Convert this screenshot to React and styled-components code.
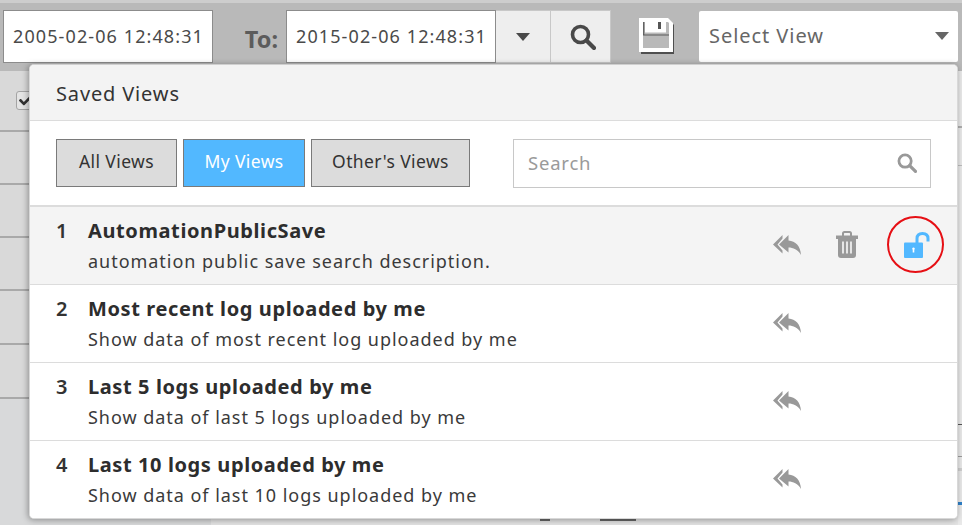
import React from 'react';
import styled, { createGlobalStyle } from 'styled-components';
import { FaCheck } from 'react-icons/fa';

const Global = createGlobalStyle`
  html, body { margin: 0; padding: 0; background: #dadbdc; }
  * { box-sizing: border-box; }
`;
const FONT = `"Noto Sans", "Open Sans", "DejaVu Sans", sans-serif`;

const Page = styled.div`
  position: relative; width: 962px; height: 525px; overflow: hidden;
  font-family: ${FONT}; background: #dadbdc; color: #333;
`;
const Toolbar = styled.div`
  height: 71px; background: #b9b9b9; border-top: 3px solid #cdcdcd;
  display: flex; align-items: flex-start; padding: 7px 4px 0 3px;
`;
const DateInput = styled.div`
  width: 210px; height: 53px; background: #fff; border: 1px solid #8c8c8c;
  display: flex; align-items: center; padding: 0 0 2px 9px;
  font-size: 18px; letter-spacing: 1.1px; color: #4a4a4a; white-space: nowrap;
`;
const ToLabel = styled.span`
  width: 73px; height: 53px; display: flex; align-items: center; justify-content: flex-end;
  padding: 4px 8px 0 0; font-size: 23.5px; font-weight: 700; color: #5c5c5c;
`;
const ToolButton = styled.div`
  width: ${p => p.$w}px; height: 53px; background: #eee; border: 1px solid #c8c8c8; border-left: 0;
  display: flex; align-items: center; justify-content: center; color: #494949;
  padding-left: ${p => p.$pl || 0}px;
`;
const SaveWrap = styled.div`
  width: 88px; height: 53px; display: flex; align-items: center; justify-content: center; padding: 0 0 1px 4px;
`;
const SelectBox = styled.div`
  width: 259px; height: 51px; margin-top: 1px; background: #fff; border-radius: 2px;
  display: flex; align-items: center; justify-content: space-between; padding: 0 9px 2px 10px;
  font-size: 20px; letter-spacing: 0.95px; color: #666;
`;
const Content = styled.div` display: flex; height: 454px; `;
const MainCol = styled.div` width: 958px; display: flex; flex-direction: column; `;
const Edge = styled.div`
  width: 4px; background: #e9e9e9; display: flex; flex-direction: column;
`;
const EdgeMark = styled.div`
  height: ${p => p.$h}px; margin-top: ${p => p.$m}px; background: ${p => p.$c};
`;
const Rows = styled.div` display: flex; flex-direction: column; height: 328px; background: #d9d9d9; `;
const BgRow = styled.div`
  height: ${p => p.$h}px; border-bottom: 2px solid #a9a9a9; padding: 20px 0 0 16px;
`;
const Check = styled.span`
  display: flex; align-items: center; justify-content: center; width: 19px; height: 19px;
  border: 1px solid #a4a4a4; border-radius: 3px; background: #e4e4e4; color: #333; font-size: 13px;
`;
const Footer = styled.div` flex: 1; display: flex; background: #e3e3e3; `;
const FooterLeft = styled.div` width: 211px; background: #d8d9da; `;
const Pager = styled.div` display: flex; align-items: flex-start; padding: 120px 0 0 329px; gap: 50px; `;
const PagerMark = styled.div` width: ${p => p.$w}px; height: 2px; background: #666; `;
const Panel = styled.div`
  position: absolute; left: 29px; top: 64px; width: 929px; height: 455px;
  background: #fff; border-radius: 5px; box-shadow: -1px 1px 6px rgba(0,0,0,.35);
  border: 1px solid #d8d8d8; border-top-color: #cfcfcf; overflow: hidden;
`;
const PanelHead = styled.div`
  height: 56px; background: #f3f3f3; border-bottom: 1px solid #dcdcdc;
  display: flex; align-items: center; padding: 1px 0 0 26px; font-size: 20px; letter-spacing: 0.85px; color: #333;
`;
const Filters = styled.div`
  height: 86px; display: flex; align-items: flex-start; padding: 18px 26px 0 26px; gap: 6px;
  border-bottom: 2px solid #dcdcdc;
`;
const Tab = styled.div`
  height: 48px; width: ${p => p.$w}px; display: flex; align-items: center; justify-content: center;
  padding-bottom: 4px; border: 1px solid #7a7a7a; font-size: 17.5px; letter-spacing: 0.4px;
  background: ${p => p.$active ? '#52b8ff' : '#dcdcdc'}; color: ${p => p.$active ? '#fff' : '#333'};
`;
const SearchBox = styled.div`
  margin-left: 37px; width: 418px; height: 49px; border: 1px solid #c8c8c8;
  display: flex; align-items: center; justify-content: space-between; padding: 0 13px 2px 14px;
  font-size: 18.5px; letter-spacing: 0.8px; color: #9a9a9a;
`;
const Row = styled.div`
  height: ${p => p.$last ? 77 : 78}px; display: flex; padding-left: 26px; background: ${p => p.$active ? '#f4f4f4' : '#fff'};
  border-bottom: ${p => p.$last ? 0 : '1px solid #dcdcdc'};
`;
const Num = styled.div` width: 32px; padding-top: 10px; font-size: 20px; font-weight: 600; color: #333; `;
const Info = styled.div` flex: 1; padding-top: 10px; `;
const Title = styled.div` font-size: 20px; line-height: 27px; font-weight: 700; letter-spacing: 0.6px; color: #2d2d2d; `;
const Desc = styled.div` font-size: 18px; line-height: 25px; margin-top: 5px; letter-spacing: 0.97px; color: #3a3a3a; `;
const Actions = styled.div` display: flex; align-items: center; width: 197px; padding: 0 0 2px 0; color: #999; `;
const ActionCell = styled.div` width: ${p => p.$w}px; display: flex; justify-content: center; `;
const LockCell = styled.div`
  width: 57px; height: 57px; border: 2px solid #e60f14; border-radius: 50%;
  display: flex; align-items: center; justify-content: center; padding: 0 0 0 3px;
`;

const views = [
  { t: 'AutomationPublicSave', d: 'automation public save search description.', own: true },
  { t: 'Most recent log uploaded by me', d: 'Show data of most recent log uploaded by me' },
  { t: 'Last 5 logs uploaded by me', d: 'Show data of last 5 logs uploaded by me' },
  { t: 'Last 10 logs uploaded by me', d: 'Show data of last 10 logs uploaded by me' },
];

const edgeMarks = [
  { m: 55, h: 2, c: '#aeaeae' }, { m: 37, h: 1, c: '#bdbdbd' }, { m: 258, h: 1, c: '#555' },
  { m: 31, h: 1, c: '#9c9c9c' }, { m: 11, h: 3, c: '#cfcfcf' }, { m: 31, h: 3, c: '#2f80c8' },
];

const SaveIcon = () => (
  <svg width="36" height="36" viewBox="0 0 36 36">
    <path d="M2 2h28l5 5v29H2z" fill="#4f4f4f" />
    <path d="M0 0h29l5 5v29H0z" fill="#fff" />
    <path d="M4 4h25l1 1v25H4z" fill="#b9b9b9" />
    <path d="M4.7 4v12.500M4 17h26" stroke="#5a5a5a" strokeWidth="1.200" fill="none" />
    <path d="M6 0h21v14.500H6z" fill="#fff" />
    <path d="M19 4h3v7h-3z" fill="#555" />
  </svg>
);
const Magnifier = ({ size, color }) => (
  <svg width={size} height={size} viewBox="0 0 26 26">
    <circle cx="10.500" cy="10.500" r="8" fill="none" stroke={color} strokeWidth="3.600" />
    <path d="M16.500 16.500L24 24" stroke={color} strokeWidth="4.200" strokeLinecap="round" />
  </svg>
);
const Caret = ({ w, h, color }) => (
  <svg width={w} height={h} viewBox="0 0 14 8"><path d="M0 0h14L7 8z" fill={color} /></svg>
);
const ReplyAll = () => (
  <svg width="28" height="20" viewBox="0 0 28 20" fill="#999">
    <path d="M9.500 0L0 9.500L9.500 18.500V15.500L4.500 9.500L9.500 3.500Z" />
    <path d="M15.500 0L6 9.500L15.500 17.500V12.500C20 12.500 25 14.500 28 20C27.500 11 22.500 6 15.500 5.500Z" />
  </svg>
);
const Trash = () => (
  <svg width="22" height="27" viewBox="0 0 22 27">
    <path d="M7 5V2.500Q7 1 8.500 1h5Q15 1 15 2.500V5" fill="none" stroke="#999" strokeWidth="2" />
    <path d="M0 4.500h22V8H0z" fill="#999" />
    <path d="M2 8h18v16q0 3-3 3H5q-3 0-3-3z" fill="#999" />
    <path d="M7 10.500v12M11 10.500v12M15 10.500v12" stroke="#f4f4f4" strokeWidth="1.700" />
  </svg>
);
const Unlock = () => (
  <svg width="26" height="26" viewBox="0 0 26 26">
    <path d="M13 11V6.500Q13 1.500 18.500 1.500Q24 1.500 24 6.500V9.500" fill="none" stroke="#52b8ff" strokeWidth="3" />
    <rect x="0" y="10.500" width="19" height="15.500" rx="1" fill="#52b8ff" />
    <path d="M9.500 15.500a1.300 1.300 0 0 1 .8 2.300v2.700h-1.600v-2.700a1.300 1.300 0 0 1 .8-2.300z" fill="#fff" />
  </svg>
);

export default function App() {
  return (
    <Page>
      <Global />
      <Toolbar>
        <DateInput>2005-02-06 12:48:31</DateInput>
        <ToLabel>To:</ToLabel>
        <DateInput>2015-02-06 12:48:31</DateInput>
        <ToolButton $w={55}><Caret w={14} h={8} color="#494949" /></ToolButton>
        <ToolButton $w={60} $pl={5}><Magnifier size={26} color="#494949" /></ToolButton>
        <SaveWrap><SaveIcon /></SaveWrap>
        <SelectBox>Select View <Caret w={14} h={8} color="#666" /></SelectBox>
      </Toolbar>
      <Content>
        <MainCol>
          <Rows>
            <BgRow $h={61}><Check><FaCheck /></Check></BgRow>
            <BgRow $h={53} /><BgRow $h={53} /><BgRow $h={53} /><BgRow $h={54} /><BgRow $h={54} />
          </Rows>
          <Footer>
            <FooterLeft />
            <Pager><PagerMark $w={10} /><PagerMark $w={36} /></Pager>
          </Footer>
        </MainCol>
        <Edge>{edgeMarks.map(e => <EdgeMark key={e.m + e.c} $m={e.m} $h={e.h} $c={e.c} />)}</Edge>
      </Content>
      <Panel>
        <PanelHead>Saved Views</PanelHead>
        <Filters>
          <Tab $w={121}>All Views</Tab>
          <Tab $w={122} $active>My Views</Tab>
          <Tab $w={159}>Other's Views</Tab>
          <SearchBox>Search <Magnifier size={20} color="#999" /></SearchBox>
        </Filters>
        {views.map((v, i) => (
          <Row key={v.t} $active={i === 0} $last={i === 3}>
            <Num>{i + 1}</Num>
            <Info><Title>{v.t}</Title><Desc>{v.d}</Desc></Info>
            <Actions>
              <ActionCell $w={54}><ReplyAll /></ActionCell>
              {v.own && <ActionCell $w={66}><Trash /></ActionCell>}
              {v.own && <ActionCell $w={71}><LockCell><Unlock /></LockCell></ActionCell>}
            </Actions>
          </Row>
        ))}
      </Panel>
    </Page>
  );
}
